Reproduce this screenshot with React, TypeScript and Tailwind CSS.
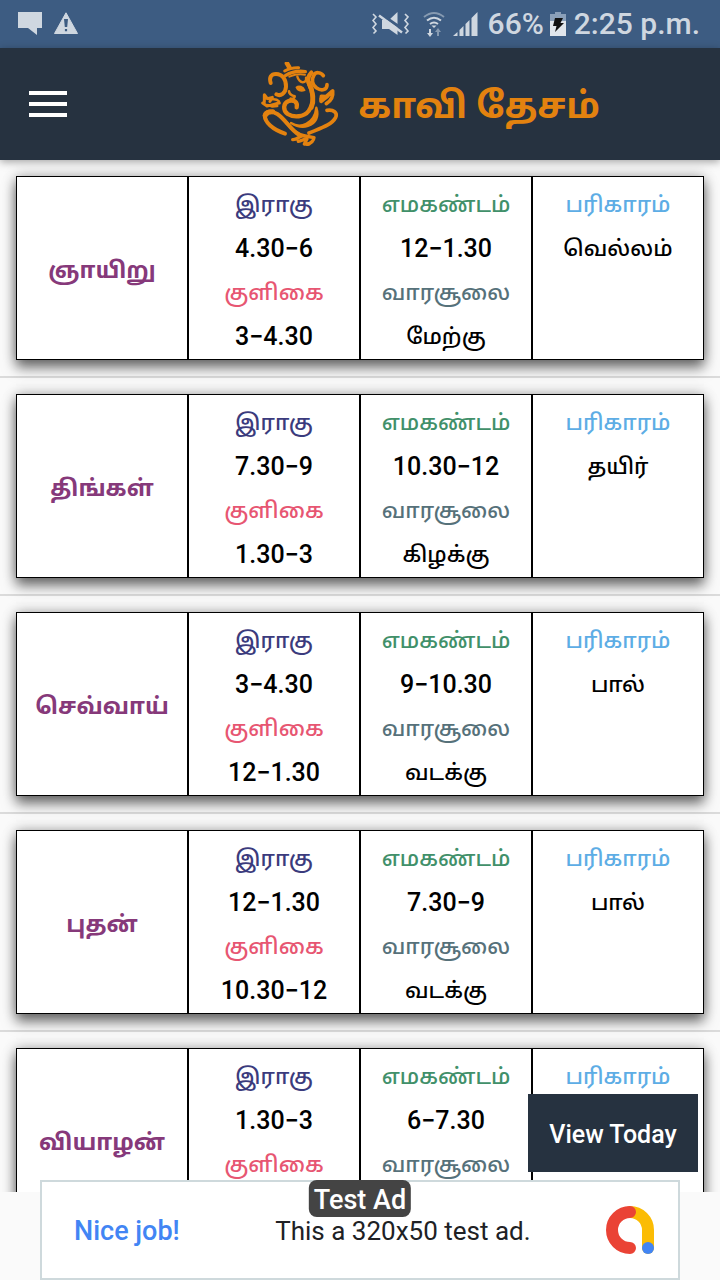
import React from "react";

type Day = {
  name: string;
  rahu: string;
  kuligai: string;
  emagandam: string;
  soolai: string;
  remedy: string;
};

const days: Day[] = [
  { name: "ஞாயிறு", rahu: "4.30−6", kuligai: "3−4.30", emagandam: "12−1.30", soolai: "மேற்கு", remedy: "வெல்லம்" },
  { name: "திங்கள்", rahu: "7.30−9", kuligai: "1.30−3", emagandam: "10.30−12", soolai: "கிழக்கு", remedy: "தயிர்" },
  { name: "செவ்வாய்", rahu: "3−4.30", kuligai: "12−1.30", emagandam: "9−10.30", soolai: "வடக்கு", remedy: "பால்" },
  { name: "புதன்", rahu: "12−1.30", kuligai: "10.30−12", emagandam: "7.30−9", soolai: "வடக்கு", remedy: "பால்" },
  { name: "வியாழன்", rahu: "1.30−3", kuligai: "9−10.30", emagandam: "6−7.30", soolai: "தெற்கு", remedy: "தைலம்" },
];

function StatusBar() {
  return (
    <div className="flex h-12 shrink-0 items-center justify-between bg-[#3d5c82] pl-[18px] pr-5 text-[#cfd7e0]">
      <div className="flex items-center gap-3">
        <svg width="24" height="24" viewBox="0 0 24 24" fill="currentColor" aria-hidden="true">
          <path d="M0 0h24v16h-5v7l-9-7H0z" />
        </svg>
        <svg width="24" height="24" viewBox="0 0 24 24" aria-hidden="true">
          <path d="M12 .8 23.500 21.500H.5z" fill="currentColor" stroke="currentColor" strokeLinejoin="round" />
          <path d="M10 7h4l-.8 8h-2.400zM10.900 17h2.200v2.200h-2.200z" fill="#3d5c82" />
        </svg>
      </div>
      <div className="flex items-center">
        <svg className="mr-3.5" width="37" height="24" viewBox="0 0 37 24" aria-hidden="true">
          <g fill="none" stroke="currentColor" strokeWidth="1.600">
            <path d="M1 2l3 3-3 3.500 3 3.500-3 3.500 3 3.500-2.500 2.500" />
            <path d="M33 2l3 3-3 3.500 3 3.500-3 3.500 3 3.500-2.500 2.500" />
          </g>
          <path d="M10 8h7l8.500-8v23L17 17h-7z" fill="currentColor" />
          <path d="M8 1.500 31 17.500" stroke="#3d5c82" strokeWidth="3" />
          <path d="M7 3.500 30 20.500" stroke="currentColor" strokeWidth="2.500" />
        </svg>
        <svg className="mr-2" width="22" height="26" viewBox="0 0 22 26" aria-hidden="true">
          <g fill="none" stroke="currentColor" strokeWidth="2">
            <path d="M1 6Q11-2 21 6" opacity=".5" />
            <path d="M4 9.500Q11 4 18 9.500" />
            <path d="M7 13Q11 10 15 13" />
          </g>
          <path d="M8.500 14.500h5L11 17z" fill="currentColor" />
          <path d="M6 18h2v4h2l-3 4-3-4h2z" fill="currentColor" />
          <path d="M14 25h2v-4h2l-3-4-3 4h2z" fill="currentColor" opacity=".5" />
        </svg>
        <svg className="mr-2.5" width="25" height="24" viewBox="0 0 25 24" fill="currentColor" aria-hidden="true">
          <path d="M0 24l4.500-4v4zM6.500 24v-6l4-4v10zM12.500 24V12l4-4v16zM18.500 24V6L24.500 0v24z" />
        </svg>
        <span className="text-[30px] font-medium leading-none">66%</span>
        <svg className="ml-1.5 mr-2" width="16" height="24" viewBox="0 0 16 24" aria-hidden="true">
          <path d="M5 0h6v2h5v8H0V2h5z" fill="#8ba0b9" />
          <path d="M0 9h16v15H0z" fill="#e1e6ec" />
          <path d="M5 6h8l-2.500 5H14L5 20l1.500-6H3z" fill="#111" />
        </svg>
        <span className="text-[30px] font-medium leading-none">2:25 p.m.</span>
      </div>
    </div>
  );
}

function Ganesha() {
  return (
    <svg width="77" height="84" viewBox="33 36 231 252" fill="none" stroke="#e3820f" strokeLinecap="round" strokeLinejoin="round" aria-hidden="true">
      <path d="M111 40l7 12" strokeWidth="14" />
      <path d="M104 63q18-11 42-10" strokeWidth="9" />
      <path d="M106 77q28-17 60-12" strokeWidth="10" />
      <path d="M118 80q24-10 47-6" strokeWidth="6" />
      <path d="M142 80q4 14 16 17 12-1 10-14" strokeWidth="7" />
      <path d="M62 99C57 82 63 72 78 72c20 0 31 18 30 38-1 20-16 30-29 23" strokeWidth="12" />
      <path d="M220 77c-9-12-23-11-28-2-8 13-6 30 8 39 15 10 31 6 31-10" strokeWidth="11" />
      <path d="M184 68c-9 9-12 22-7 33 15 28 15 60-1 82-14 18-44 21-63 9-15-11-14-33 3-39 15-5 28 3 24 19" strokeWidth="13" />
      <path d="M176 97c14 30 16 58 8 76" strokeWidth="14" />
      <path d="M139 112c8-7 20-2 25 9-12 5-22 0-25-9z" fill="#e3820f" strokeWidth="5" />
      <path d="M117 124c1 9 7 12 17 15 0 7-7 9-12 7" strokeWidth="8" />
      <path d="M38 159l13 9c14-2 25-7 37-9M43 156V134l9 12 15-4-7 12" strokeWidth="9" />
      <path d="M68 148q12-1 19 6M54 165l13 5 15-2" strokeWidth="7" />
      <path d="M213 145v9c14-9 24-18 32-29M214 139l14 1 20-17c2 16-4 29-19 38" strokeWidth="11" />
      <path d="M105 251C67 238 45 217 44 196c3-13 22-14 38-4 26 17 38 47 67 64" strokeWidth="12" />
      <path d="M46 196q5-12 22-11" strokeWidth="15" />
      <path d="M199 173c9 27-2 48-25 55-19 6-37 0-51-9 27 17 70 5 76-46z" fill="#e3820f" strokeWidth="7" />
      <path d="M231 181c20-3 32 7 26 21-11 22-41 31-80 47" strokeWidth="11" />
      <path d="M100 208c23 22 36 46 65 50l27 5c-1 10-8 16-20 20" strokeWidth="10" />
      <path d="M128 269c15 1 19-12 34-12M145 274c11-1 17-8 26-7l-8 15h14" strokeWidth="10" />
    </svg>
  );
}

function Header() {
  return (
    <header className="relative z-10 flex h-28 shrink-0 items-center bg-[#263240] shadow-[0_2px_8px_rgba(0,0,0,0.35)]">
      <button type="button" aria-label="Menu" className="ml-[29px] flex w-[38px] flex-col gap-[7px]">
        <span className="h-1 bg-white" />
        <span className="h-1 bg-white" />
        <span className="h-1 bg-white" />
      </button>
      <div className="flex flex-1 items-center justify-end gap-5 pr-[120px]">
        <Ganesha />
        <h1 className="whitespace-nowrap pt-1 text-[36px] font-bold leading-none text-[#e3820f]">காவி தேசம்</h1>
      </div>
    </header>
  );
}

const cell = "border border-black px-0 pb-0 pt-1.5 align-top";
const label = "h-11 text-[22px] font-medium leading-[44px]";
const time = "h-11 text-[25px] font-medium leading-[44px]";

function DayCard({ day }: { day: Day }) {
  return (
    <li className="border-b-2 border-[#dbdbdb] p-4">
      <table className="w-full table-fixed border-separate border-spacing-0 bg-white text-center text-black shadow-[0_8px_12px_rgba(0,0,0,0.5),0_0_12px_rgba(0,0,0,0.3)]">
        <tbody>
          <tr>
            <th scope="row" className="border border-black px-0 pb-0 pt-1.5 align-middle text-[23px] font-bold text-[#86397a]">{day.name}</th>
            <td className={cell}>
              <div className={`${label} text-[#3b3b7d]`}>இராகு</div>
              <div className={time}>{day.rahu}</div>
              <div className={`${label} text-[#e75672]`}>குளிகை</div>
              <div className={time}>{day.kuligai}</div>
            </td>
            <td className={cell}>
              <div className={`${label} text-[#41906a]`}>எமகண்டம்</div>
              <div className={time}>{day.emagandam}</div>
              <div className={`${label} text-[#56717a]`}>வாரசூலை</div>
              <div className={label}>{day.soolai}</div>
            </td>
            <td className={cell}>
              <div className={`${label} text-[#5dade5]`}>பரிகாரம்</div>
              <div className={label}>{day.remedy}</div>
            </td>
          </tr>
        </tbody>
      </table>
    </li>
  );
}

function AdBanner() {
  return (
    <aside className="relative z-20 mx-10 -mt-3 flex h-[100px] shrink-0 items-center justify-between border-2 border-[#ced9dc] bg-white pl-8 pr-6 text-[26px]">
      <a href="#ad" className="pt-0.5 text-[27px] font-medium text-[#4285f4]">Nice job!</a>
      <span className="pl-[66px] pt-0.5 text-[#202124]">This a 320x50 test ad.</span>
      <svg className="ml-[46px]" width="48" height="48" viewBox="0 0 48 48" fill="none" strokeWidth="12" strokeLinecap="round" aria-hidden="true">
        <path d="M24 6a18 18 0 0 1 18 18v18" stroke="#fbbc04" />
        <path d="M24 6a18 18 0 0 0 0 36" stroke="#ea4335" />
        <circle cx="42" cy="42" r="6" fill="#4285f4" />
      </svg>
      <span className="absolute left-1/2 top-[-2px] flex h-[37px] -translate-x-1/2 items-center whitespace-nowrap rounded-lg bg-[#444] px-[5px] pt-1 text-[27px] font-medium text-white">Test Ad</span>
    </aside>
  );
}

export default function App() {
  return (
    <div className="flex h-screen flex-col overflow-hidden bg-[#fafafa] font-['Roboto','Noto_Sans_Tamil','Noto_Sans',sans-serif]">
      <StatusBar />
      <Header />
      <main className="relative min-h-0 flex-1">
        <ul className="h-full overflow-y-auto [scrollbar-width:none]">
          {days.map((day) => (
            <DayCard key={day.name} day={day} />
          ))}
        </ul>
        <button type="button" className="absolute bottom-5 right-[22px] h-[78px] w-[170px] bg-[#263240] pt-1 text-[25px] font-medium text-white">
          View Today
        </button>
      </main>
      <AdBanner />
    </div>
  );
}
